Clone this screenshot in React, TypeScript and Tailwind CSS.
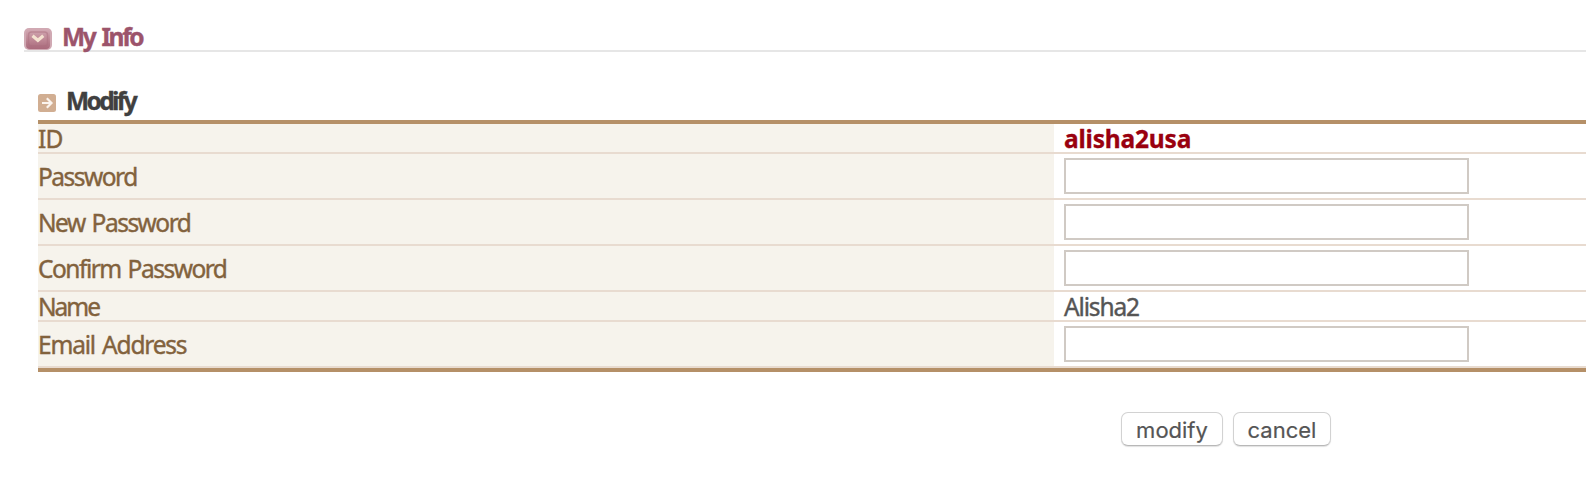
type Row = {
  label: string;
  spacing: string;
  value?: string;
  strong?: boolean;
};

const rows: Row[] = [
  { label: "ID", spacing: "tracking-[-0.8px]", value: "alisha2usa", strong: true },
  { label: "Password", spacing: "tracking-[-1.5px]" },
  { label: "New Password", spacing: "tracking-[-1.5px] [word-spacing:2px]" },
  { label: "Confirm Password", spacing: "tracking-[-1.5px] [word-spacing:2px]" },
  { label: "Name", spacing: "tracking-[-2px]", value: "Alisha2" },
  { label: "Email Address", spacing: "tracking-[-1.2px] [word-spacing:2px]" },
];

function SectionIcon() {
  return (
    <svg className="mt-[8px] h-[22px] w-[28px] shrink-0 blur-[0.4px]" viewBox="0 0 28 22" fill="none">
      <defs>
        <linearGradient id="badge" x1="0" y1="0" x2="0" y2="1">
          <stop offset="0" stopColor="#d3aab4" />
          <stop offset="0.5" stopColor="#c08a97" />
          <stop offset="1" stopColor="#a9697b" />
        </linearGradient>
      </defs>
      <rect width="28" height="22" rx="5" fill="#d0a9b3" />
      <rect x="2" y="1" width="24" height="20" rx="4" fill="url(#badge)" />
      <rect x="4.5" y="4" width="19" height="14" rx="3" stroke="#a96d7d" strokeOpacity="0.5" strokeWidth="1.5" />
      <path d="M8.5 7.8L13.9 12.3L19.3 7.8" stroke="#f4e2d0" strokeWidth="3.2" />
    </svg>
  );
}

function ArrowIcon() {
  return (
    <svg className="mt-[10px] h-[18px] w-[18px] shrink-0" viewBox="0 0 18 18" fill="none">
      <rect width="18" height="18" rx="2.5" fill="#d1ae92" />
      <path d="M4 9H13.5M8.8 4.3L13.5 9L8.8 13.7" stroke="#fbf4ee" strokeWidth="2.2" />
    </svg>
  );
}

export default function App() {
  return (
    <div className="h-[502px] w-full overflow-hidden bg-white pl-6 pt-5 font-['Noto_Sans',sans-serif] text-[24.5px] leading-[28px]">
      <header className="flex h-8 border-b-2 border-[#e6e6e6]">
        <SectionIcon />
        <h1 className="ml-[10px] mt-[3px] whitespace-nowrap font-bold tracking-[-2.35px] text-[#9c546b] [-webkit-text-stroke:0.4px] [word-spacing:3px]">
          My Info
        </h1>
      </header>

      <main className="ml-[14px] pt-8">
        <div className="flex h-9">
          <ArrowIcon />
          <h2 className="ml-[10px] mt-[3px] whitespace-nowrap font-bold tracking-[-2.6px] text-[#404040] [-webkit-text-stroke:0.4px]">
            Modify
          </h2>
        </div>

        <div className="border-y-4 border-[#b59068]">
          {rows.map((row) => (
            <div
              key={row.label}
              className={`flex border-b-2 border-[#e8dbd0] ${row.value ? "h-[30px]" : "h-[46px]"}`}
            >
              <div
                className={`flex w-[1016px] shrink-0 items-center whitespace-nowrap bg-[#f6f3ec] pt-[2px] text-[#82623d] [-webkit-text-stroke:0.4px] ${row.spacing}`}
              >
                {row.label}
              </div>
              <div className="flex flex-1 items-center pl-[10px]">
                {row.value ? (
                  <span
                    className={
                      row.strong
                        ? "pt-[2px] font-bold tracking-[-0.2px] text-[#99000f] [-webkit-text-stroke:0.3px]"
                        : "pt-[2px] tracking-[-1.15px] text-[#555555] [-webkit-text-stroke:0.4px]"
                    }
                  >
                    {row.value}
                  </span>
                ) : (
                  <input
                    aria-label={row.label}
                    className="h-9 w-[405px] border-2 border-[#d0cac4] bg-white px-2 outline-none"
                  />
                )}
              </div>
            </div>
          ))}
        </div>

        <div className="flex gap-[10px] pl-[1083px] pt-10 font-['Inter',sans-serif] text-[22px] text-[#555555] [-webkit-text-stroke:0.2px]">
          <button className="h-[34px] w-[102px] rounded-[7px] border border-[#d2d2d2] border-b-[#b8b8b8] bg-white pt-px leading-[32px] shadow-[0_1px_1px_rgba(0,0,0,0.12)]">
            modify
          </button>
          <button className="h-[34px] w-[98px] rounded-[7px] border border-[#d2d2d2] border-b-[#b8b8b8] bg-white pt-px leading-[32px] shadow-[0_1px_1px_rgba(0,0,0,0.12)]">
            cancel
          </button>
        </div>
      </main>
    </div>
  );
}
